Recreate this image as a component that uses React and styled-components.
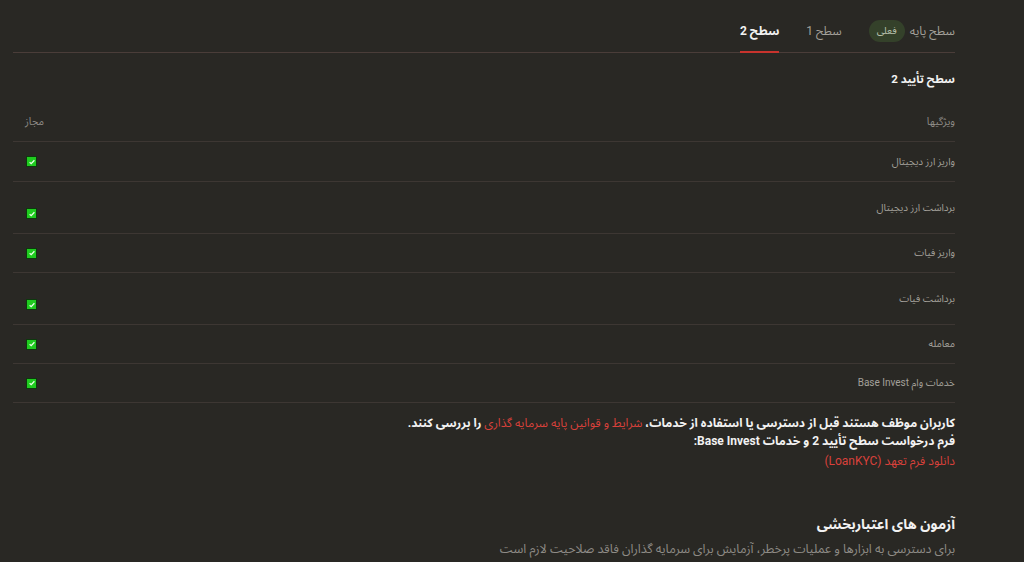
import styled, { createGlobalStyle } from "styled-components";

const COLORS = {
  BG: "#292824",
  LINE: "#3d3733",
  TAB_LINE: "#4a3d39",
  RED: "#d9413b",
  WHITE: "#f2f2f2",
  GREY: "#a3a09a",
  GREY_DARK: "#8e8b86",
  PILL: "#34412a",
  GREEN: "#1fcb1f",
};

const FONT = `"Roboto", "Noto Sans Arabic", "DejaVu Sans", sans-serif`;

const FEATURES = [
  { title: "واریز ارز دیجیتال" },
  { title: "برداشت ارز دیجیتال", tall: true },
  { title: "واریز فیات" },
  { title: "برداشت فیات", tall: true },
  { title: "معامله" },
  { title: "خدمات وام Base Invest" },
];

const GlobalStyle = createGlobalStyle`
  html, body {
    margin: 0;
    padding: 0;
    background: ${COLORS.BG};
    font-family: ${FONT};
  }
`;

const CheckIcon = () => (
  <svg width="8" height="8" viewBox="0 0 8 8">
    <path d="M1.6 4.2 L3.2 5.7 L6.4 2.3" fill="none" stroke="#e8ffe8" strokeWidth="1.3" />
  </svg>
);

const App = () => {
  return (
    <Page>
      <GlobalStyle />
      <Container>
        <Tabs>
          <Tab>
            سطح پایه
            <CurrentPill>فعلی</CurrentPill>
          </Tab>
          <Tab>سطح 1</Tab>
          <Tab active>سطح 2</Tab>
        </Tabs>

        <Title>سطح تأیید 2</Title>

        <Table>
          <HeadRow>
            <HeadCell>ویژگیها</HeadCell>
            <HeadCell>مجاز</HeadCell>
          </HeadRow>
          {FEATURES.map((item, i) => (
            <Row key={item.title} tall={item.tall} first={i === 0}>
              <Label>{item.title}</Label>
              <CheckCell tall={item.tall}>
                <CheckBox>
                  <CheckIcon />
                </CheckBox>
              </CheckCell>
            </Row>
          ))}
        </Table>

        <Notice>
          <NoticeLine>
            کاربران موظف هستند قبل از دسترسی یا استفاده از خدمات،{" "}
            <RedText>شرایط و قوانین پایه سرمایه گذاری</RedText> را بررسی کنند.
          </NoticeLine>
          <NoticeLine>فرم درخواست سطح تأیید 2 و خدمات Base Invest:</NoticeLine>
          <DownloadLink>دانلود فرم تعهد (LoanKYC)</DownloadLink>
        </Notice>

        <Section>
          <SectionTitle>آزمون های اعتباربخشی</SectionTitle>
          <SectionText>
            برای دسترسی به ابزارها و عملیات پرخطر، آزمایش برای سرمایه گذاران فاقد صلاحیت لازم است
          </SectionText>
        </Section>
      </Container>
    </Page>
  );
};

const Page = styled.div`
  width: 1024px;
  height: 562px;
  overflow: hidden;
  background: ${COLORS.BG};
`;

const Container = styled.div`
  direction: rtl;
  display: flex;
  flex-direction: column;
  margin: 0 69px 0 13px;
`;

const Tabs = styled.div`
  display: flex;
  align-items: stretch;
  gap: 27px;
  height: 52px;
  border-bottom: 1px solid ${COLORS.TAB_LINE};
`;

const Tab = styled.div`
  display: flex;
  align-items: center;
  gap: 5px;
  padding-top: 11px;
  line-height: 18px;
  font-size: 12px;
  font-weight: ${(props) => (props.active ? 700 : 400)};
  color: ${(props) => (props.active ? COLORS.WHITE : COLORS.GREY)};
  margin-bottom: -1px;
  border-bottom: 2px solid ${(props) => (props.active ? "#c8332d" : "transparent")};
  cursor: pointer;
`;

const CurrentPill = styled.span`
  display: inline-flex;
  align-items: center;
  justify-content: center;
  height: 22px;
  padding: 0 8px;
  border-radius: 11px;
  background: ${COLORS.PILL};
  color: #b9c2ae;
  font-size: 10px;
`;

const Title = styled.h3`
  margin: 17px 0 0;
  line-height: 18px;
  font-size: 11.5px;
  font-weight: 700;
  color: ${COLORS.WHITE};
`;

const Table = styled.div`
  display: flex;
  flex-direction: column;
  margin-top: 15px;
`;

const HeadRow = styled.div`
  display: flex;
  justify-content: space-between;
  align-items: center;
  height: 38px;
  padding: 0 0 0 12px;
  border-bottom: 1px solid ${COLORS.LINE};
`;

const HeadCell = styled.span`
  line-height: 16px;
  font-size: 10.5px;
  color: ${COLORS.GREY_DARK};
`;

const Row = styled.div`
  display: flex;
  justify-content: space-between;
  align-items: center;
  height: ${(props) => (props.tall ? "51px" : props.first ? "39px" : "38px")};
  padding: 0 0 0 13px;
  border-bottom: 1px solid ${COLORS.LINE};
`;

const Label = styled.span`
  line-height: 16px;
  font-size: 10px;
  color: ${COLORS.GREY};
`;

const CheckCell = styled.div`
  display: flex;
  padding-top: ${(props) => (props.tall ? "12px" : "0")};
`;

const CheckBox = styled.span`
  display: inline-flex;
  align-items: center;
  justify-content: center;
  width: 9px;
  height: 9px;
  background: ${COLORS.GREEN};
  border: 1px solid #0d3a0d;
`;

const Notice = styled.div`
  display: flex;
  flex-direction: column;
  margin-top: 11px;
`;

const NoticeLine = styled.p`
  margin: 0;
  line-height: 18px;
  font-size: 12px;
  font-weight: 700;
  color: ${COLORS.WHITE};
`;

const RedText = styled.span`
  color: ${COLORS.RED};
  font-weight: 400;
`;

const DownloadLink = styled.a`
  margin-top: 2px;
  line-height: 18px;
  font-size: 12px;
  color: ${COLORS.RED};
  cursor: pointer;
`;

const Section = styled.div`
  display: flex;
  flex-direction: column;
  gap: 4px;
  margin-top: 43px;
`;

const SectionTitle = styled.h2`
  margin: 0;
  line-height: 22px;
  font-size: 14px;
  font-weight: 700;
  color: ${COLORS.WHITE};
`;

const SectionText = styled.p`
  margin: 0;
  line-height: 20px;
  font-size: 12.5px;
  color: ${COLORS.GREY_DARK};
`;

export default App;
